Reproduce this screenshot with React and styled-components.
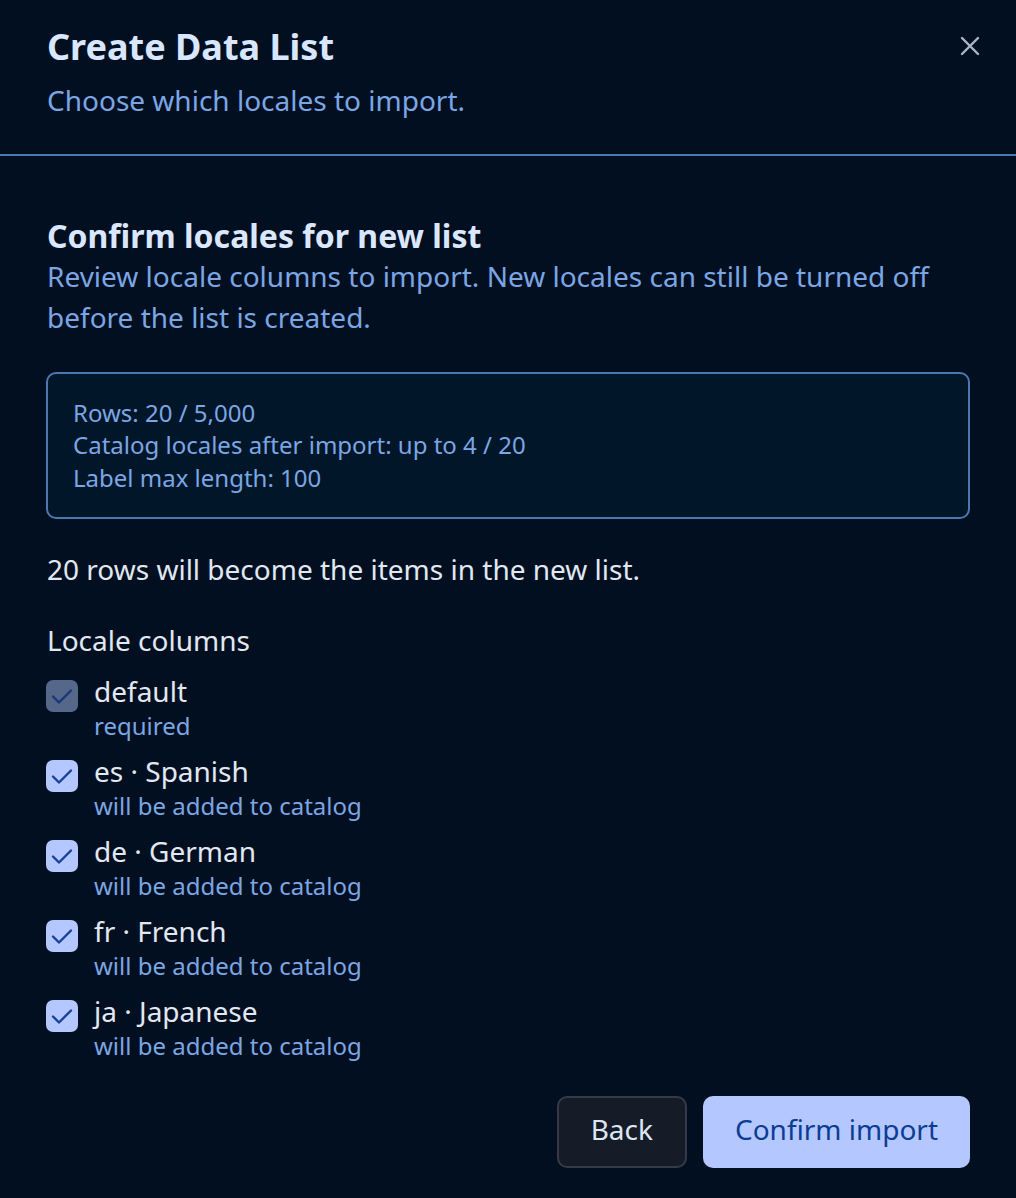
import React, { useState } from 'react';
import styled, { createGlobalStyle } from 'styled-components';

const GlobalStyle = createGlobalStyle`
  html, body {
    margin: 0;
    padding: 0;
    background: #020f20;
  }
  body {
    font-family: "Noto Sans", "Open Sans", sans-serif;
    -webkit-font-smoothing: antialiased;
  }
`;

const Dialog = styled.div`
  box-sizing: border-box;
  width: 1016px;
  min-height: 1198px;
  background: #020f20;
  display: flex;
  flex-direction: column;
  position: relative;
`;

const Header = styled.header`
  padding: 24px 46px 34px 47px;
  border-bottom: 2px solid #4b78b2;
`;

const Title = styled.h1`
  margin: 0;
  font-size: 36px;
  line-height: 45.5px;
  font-weight: 700;
  color: #d8e6ff;
`;

const Subtitle = styled.p`
  margin: 11px 0 0;
  font-size: 28px;
  line-height: 39px;
  color: #7ba6e4;
`;

const CloseButton = styled.button`
  position: absolute;
  top: 30px;
  right: 30px;
  width: 32px;
  height: 32px;
  padding: 0;
  border: none;
  background: transparent;
  color: #a8b6c9;
  display: flex;
  align-items: center;
  justify-content: center;
  cursor: pointer;
`;

const Body = styled.div`
  padding: 60px 46px 30px 47px;
  display: flex;
  flex-direction: column;
`;

const SectionTitle = styled.h2`
  margin: 0;
  font-size: 32px;
  line-height: 40px;
  font-weight: 700;
  color: #dbe7ff;
`;

const Description = styled.p`
  margin: 0;
  font-size: 28px;
  line-height: 41px;
  color: #7ba6e4;
`;

const InfoBox = styled.div`
  margin: 34px 0 0 -1px;
  padding: 23px 25px;
  border: 2px solid #4b78b2;
  border-radius: 10px;
  background: #021629;
  display: flex;
  flex-direction: column;
`;

const InfoLine = styled.div`
  font-size: 24px;
  line-height: 32.5px;
  color: #7ba6e4;
`;

const Text = styled.p`
  margin: ${({ $top }) => $top}px 0 0;
  font-size: 28px;
  line-height: 39px;
  color: #e1e8f2;
`;

const LocaleList = styled.div`
  margin-top: 12px;
  display: flex;
  flex-direction: column;
  gap: 9.5px;
`;

const LocaleRow = styled.label`
  display: flex;
  align-items: flex-start;
  gap: 16px;
  cursor: ${({ $disabled }) => ($disabled ? 'default' : 'pointer')};
`;

const Box = styled.span`
  flex: none;
  box-sizing: border-box;
  width: 32px;
  height: 32px;
  margin: 7.5px 0 0 -1px;
  border-radius: 7px;
  background: ${({ $disabled, $checked }) =>
    $disabled ? '#56688a' : $checked ? '#b5c7ff' : 'transparent'};
  border: ${({ $checked }) => ($checked ? 'none' : '2px solid #7ba6e4')};
  color: ${({ $disabled }) => ($disabled ? '#1a3878' : '#16429a')};
  display: flex;
  align-items: center;
  justify-content: center;
`;

const LocaleText = styled.div`
  display: flex;
  flex-direction: column;
`;

const LocaleName = styled.span`
  font-size: 28px;
  line-height: 38px;
  color: #e1e8f2;
`;

const LocaleNote = styled.span`
  font-size: 24px;
  line-height: 32.5px;
  color: #7ba6e4;
`;

const Footer = styled.div`
  margin-top: 33px;
  display: flex;
  justify-content: flex-end;
  gap: 16px;
`;

const Button = styled.button`
  box-sizing: border-box;
  height: 72px;
  padding: 0 32px 5px;
  border-radius: 10px;
  font-family: "Noto Sans", "Open Sans", sans-serif;
  font-size: 28px;
  cursor: pointer;
  border: ${({ $primary }) => ($primary ? 'none' : '2px solid #353b46')};
  background: ${({ $primary }) => ($primary ? '#b5c7ff' : '#151c28')};
  color: ${({ $primary }) => ($primary ? '#0c3d94' : '#dde6f5')};
`;

const CheckIcon = () => (
  <svg width="24" height="24" viewBox="0 0 24 24" fill="none" stroke="currentColor"
    strokeWidth="2.4" strokeLinecap="round" strokeLinejoin="round">
    <path d="M3 12.5l6 6L21 6.5" />
  </svg>
);

const locales = [
  { code: 'default', name: 'default', note: 'required', locked: true },
  { code: 'es', name: 'es · Spanish', note: 'will be added to catalog' },
  { code: 'de', name: 'de · German', note: 'will be added to catalog' },
  { code: 'fr', name: 'fr · French', note: 'will be added to catalog' },
  { code: 'ja', name: 'ja · Japanese', note: 'will be added to catalog' },
];

export default function App() {
  const [selected, setSelected] = useState(locales.map((l) => l.code));

  const toggle = (code) => {
    setSelected((prev) =>
      prev.includes(code) ? prev.filter((c) => c !== code) : [...prev, code]
    );
  };

  return (
    <>
      <GlobalStyle />
      <Dialog>
        <Header>
          <Title>Create Data List</Title>
          <Subtitle>Choose which locales to import.</Subtitle>
        </Header>
        <CloseButton aria-label="Close">
          <svg width="22" height="22" viewBox="0 0 22 22" fill="none" stroke="currentColor"
            strokeWidth="2.4" strokeLinecap="round">
            <path d="M3 3l16 16M19 3L3 19" />
          </svg>
        </CloseButton>

        <Body>
          <SectionTitle>Confirm locales for new list</SectionTitle>
          <Description>
            Review locale columns to import. New locales can still be turned off
            before the list is created.
          </Description>

          <InfoBox>
            <InfoLine>Rows: 20 / 5,000</InfoLine>
            <InfoLine>Catalog locales after import: up to 4 / 20</InfoLine>
            <InfoLine>Label max length: 100</InfoLine>
          </InfoBox>

          <Text $top={31}>20 rows will become the items in the new list.</Text>
          <Text $top={32}>Locale columns</Text>

          <LocaleList>
            {locales.map((l) => {
              const checked = selected.includes(l.code);
              return (
                <LocaleRow
                  key={l.code}
                  $disabled={l.locked}
                  onClick={() => !l.locked && toggle(l.code)}
                >
                  <Box $checked={checked} $disabled={l.locked}>
                    {checked && <CheckIcon />}
                  </Box>
                  <LocaleText>
                    <LocaleName>{l.name}</LocaleName>
                    <LocaleNote>{l.note}</LocaleNote>
                  </LocaleText>
                </LocaleRow>
              );
            })}
          </LocaleList>

          <Footer>
            <Button>Back</Button>
            <Button $primary>Confirm import</Button>
          </Footer>
        </Body>
      </Dialog>
    </>
  );
}
